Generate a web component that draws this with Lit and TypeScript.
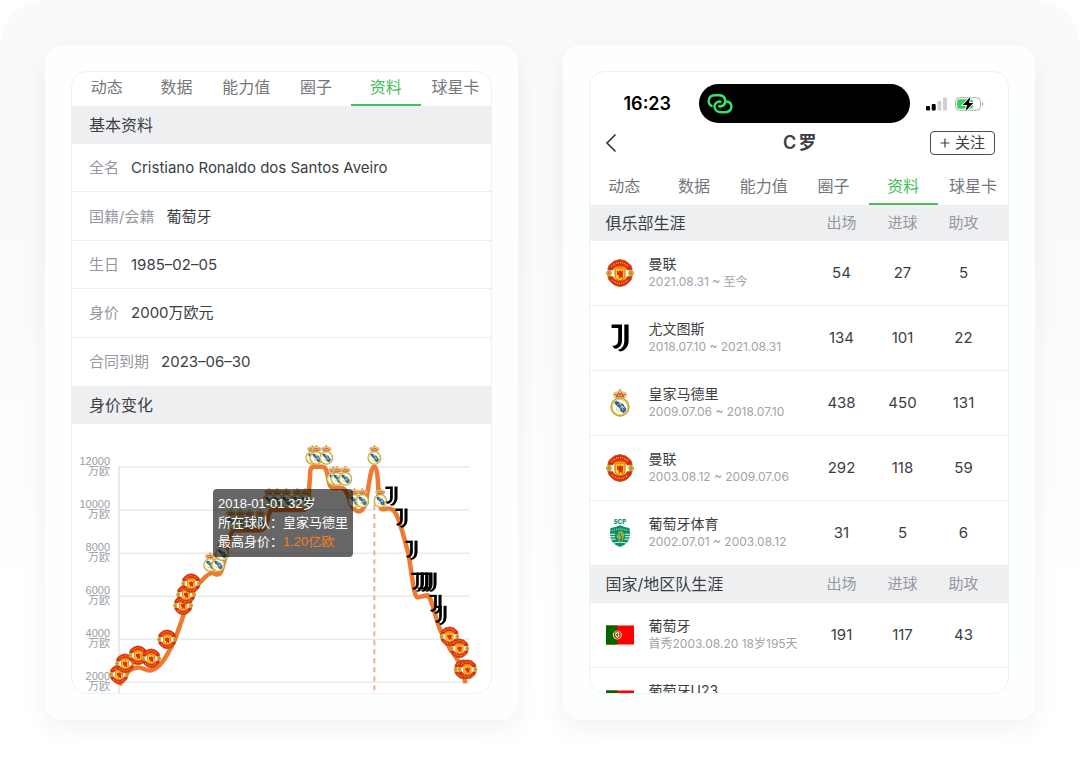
import { LitElement, html, css, svg } from "lit";
import { customElement, property } from "lit/decorators.js";
import { classMap } from "lit/directives/class-map.js";

type Crest = "united" | "juve" | "madrid" | "sporting" | "portugal";

interface Spell {
  crest: Crest;
  team: string;
  period: string;
  stats: [string, string, string];
}

const united = svg`
  <circle cx="14" cy="14" r="11.500" fill="#fffbe8"/>
  <path d="M1.800 11Q2 6.500 4.500 5Q8 1 14 .6Q20 1 23.500 5Q26 6.500 26.200 11L21.300 11Q19 6.800 14 6.700Q9 6.800 6.700 11Z" fill="#e8240c" stroke="#97701c" stroke-width=".8"/>
  <path d="M1.800 17.500Q2.500 21.500 5 23.200Q8.500 27.300 14 27.500Q19.500 27.300 23 23.200Q25.500 21.500 26.200 17.500L21.500 17.500Q19.500 21.700 14 21.900Q8.500 21.700 6.500 17.500Z" fill="#e8240c" stroke="#97701c" stroke-width=".8"/>
  <path d="M5.200 7.800Q14 -.6 22.800 7.800M5.800 20.800Q14 28.200 22.200 20.800" fill="none" stroke="#ffb01c" stroke-width="1.500" stroke-dasharray="1 1"/>
  <path d="M9 7.600H19V17.500Q18.500 20.500 14 21.900Q9.500 20.500 9 17.500Z" fill="#ffd514" stroke="#d9590e" stroke-width="1"/>
  <path d="M9.600 8.200H18.400V10.200H9.600Z" fill="#f58a16"/>
  <path d="M11 11.500L12.800 12.600L14.200 10.900L15.300 12.600L17.400 11.400L16.700 16L16.900 19.800L14.900 17.900L13 20.200L12.800 16.800L11 15.600Z" fill="#e02a0b"/>
  <circle cx="2.900" cy="14.300" r="2.300" fill="#ffcf14" stroke="#a0650f" stroke-width=".8"/>
  <circle cx="25.100" cy="14.300" r="2.300" fill="#ffcf14" stroke="#a0650f" stroke-width=".8"/>
  <path d="M1.800 14.300H4M24 14.300H26.200M2.900 13V15.600M25.100 13V15.600" stroke="#c4500b" stroke-width=".7"/>`;

const juve = svg`
  <path d="M5.600 .6H16V17.200Q15.800 21.500 12.300 23.700Q9.900 25.200 8 24.300L6.300 21.600Q9.300 22.200 11 20.300Q12.100 19 12.200 16.800V4H5.600Z" fill="#000"/>
  <path d="M18.300 .6H22.600V17.200Q22.400 22 19 25.300Q16.500 27.600 14 27.500L11.800 25.900Q15.300 25 16.800 22.700Q18.200 20.500 18.300 17.200Z" fill="#000"/>`;

const madrid = svg`
  <circle cx="14" cy="18" r="9" fill="#fbf4c8" stroke="#b5a545" stroke-width="1.400"/>
  <circle cx="14" cy="18" r="7.600" fill="#fff" stroke="#e6d054" stroke-width="1.200"/>
  <path d="M8.400 13.400Q9.500 11.600 11.800 12.400L17.500 15.500Q18.500 18 20.200 19.500Q20.200 22.500 17.800 24L14.500 22.500Q14.800 19.800 12.500 18Q9.500 16.500 8.400 13.400Z" fill="#1a5fb0"/>
  <path d="M11.500 15.500Q15.500 13.200 17.200 15M10.300 18.800Q10.500 23 15.500 22.300M14 14.200L17.200 21.400M12.200 20.400L16.600 17.400" fill="none" stroke="#d8c55c" stroke-width="1"/>
  <path d="M15.800 16.800L18.400 19.200" stroke="#fff" stroke-width=".9"/>
  <path d="M9 8.700Q6.700 6.600 7.300 4.700Q8.500 2.500 11 3Q12.500 1.500 14 2Q15.500 1.500 17 3Q19.500 2.500 20.700 4.700Q21.300 6.600 19 8.700Q14 7.400 9 8.700Z" fill="#f3cf78" stroke="#b09a58" stroke-width=".6"/>
  <path d="M8.700 5.200L11 6.200L12.700 4L14 6L15.300 4L17 6.200L19.300 5.200M10 7.700Q14 6.600 18 7.700" fill="none" stroke="#d6483f" stroke-width="1.200"/>
  <path d="M14 0V2.400M12.900 1H15.100" stroke="#a98d2a" stroke-width=".8"/>`;

const sporting = svg`
  <text x="14" y="5.200" text-anchor="middle" font-family="Inter, sans-serif" font-size="6" font-weight="800" fill="#0b8a5b">SCP</text>
  <path d="M4.600 9Q9.500 8.500 14 6.200Q18.500 8.500 23.400 9Q25.400 19 20.800 24Q18 26.700 14 28Q10 26.700 7.200 24Q2.600 19 4.600 9Z" fill="#0a9064"/>
  <path d="M3.600 15.300H9M19 15.300H24.400M3.600 17.700H9M19 17.700H24.400M4.400 20.200H9.500M18.500 20.200H23.600M6.500 24.200Q14 21.800 21.500 24.200" fill="none" stroke="#eef9f4" stroke-width="1"/>
  <path d="M6 12Q14 8 22 12" fill="none" stroke="#8ad0b4" stroke-width="1.300" stroke-dasharray="1.200 .8"/>
  <path d="M12.500 21.500L14.200 18.200L11.800 18.600L11 16.500M13.600 18.200L12.400 14.600L14.500 12.600L16.600 14L15 15.400L17 17.400L16 21M17 17.400L18 14.500" fill="none" stroke="#c9b23c" stroke-width="1.300"/>`;

const portugal = svg`
  <path d="M0 4.500H28V23.500H0Z" fill="#f00"/>
  <path d="M0 4.500H11.300V23.500H0Z" fill="#060"/>
  <circle cx="11.300" cy="14" r="4" fill="none" stroke="#e6d31c" stroke-width="1.200"/>
  <path d="M7.800 12.200L14.800 15.800M7.600 15.500Q11 12.500 15 12.500" fill="none" stroke="#d9c61a" stroke-width=".7"/>
  <path d="M9 11H13.600V14.600Q13.500 16.800 11.300 17.200Q9.100 16.800 9 14.600Z" fill="#fff" stroke="#e02020" stroke-width=".9"/>
  <path d="M11.300 12.200V15.800M10 13.800H12.600" stroke="#1c3fa8" stroke-width="1"/>`;

const crests = { united, juve, madrid, sporting, portugal };

const tabNames = ["动态", "数据", "能力值", "圈子", "资料", "球星卡"];

@customElement("profile-tabs")
export class ProfileTabs extends LitElement {
  @property() active = "资料";

  static styles = css`
    :host {
      display: block;
    }
    .tabs {
      display: grid;
      grid-template-columns: repeat(6, 1fr);
    }
    .tab {
      height: 34px;
      padding: 0 0 2px;
      border: 0;
      border-bottom: 2px solid transparent;
      background: none;
      color: #75777c;
      font: 400 16px/24px Inter, "Noto Sans CJK SC", sans-serif;
      white-space: nowrap;
    }
    .active {
      border-color: #4abf5d;
      color: #43bd57;
    }
  `;

  render() {
    return html`<nav class="tabs">
      ${tabNames.map(
        (name) => html`<button type="button"
          class=${classMap({ tab: true, active: name === this.active })}>${name}</button>`
      )}
    </nav>`;
  }
}

@customElement("value-chart")
export class ValueChart extends LitElement {
  static styles = css`
    :host {
      display: block;
      position: relative;
    }
    .plot {
      display: block;
      width: 100%;
    }
    .axis {
      fill: #989da3;
      font: 11px "Liberation Sans", "Noto Sans CJK SC", sans-serif;
      text-anchor: end;
    }
    .tip {
      position: absolute;
      left: 141px;
      top: 65px;
      padding: 5px 5px 6px;
      border-radius: 4px;
      background: rgba(0, 0, 0, 0.6);
      color: #fff;
      font: 13px/19px "Liberation Sans", "Noto Sans CJK SC", sans-serif;
      white-space: nowrap;
    }
    .line {
      margin: 0;
    }
    .price {
      color: #f57c1c;
    }
  `;

  private marks: [Crest, number, number][] = [
    ["united", 119, 674], ["united", 125, 663], ["united", 138, 655], ["united", 151, 658],
    ["united", 167, 639], ["united", 183, 605], ["united", 186, 594], ["united", 191, 583],
    ["madrid", 210, 562], ["madrid", 218, 562], ["madrid", 222, 551],
    ["madrid", 231, 519], ["madrid", 240, 519], ["madrid", 249, 519], ["madrid", 260, 519],
    ["madrid", 269, 498], ["madrid", 277, 498], ["madrid", 286, 498], ["madrid", 297, 498], ["madrid", 305, 498],
    ["madrid", 312, 455], ["madrid", 316, 455], ["madrid", 326, 455],
    ["madrid", 333, 476], ["madrid", 337, 476], ["madrid", 345, 476],
    ["madrid", 354, 498], ["madrid", 362, 498], ["madrid", 374, 455], ["madrid", 380, 498],
    ["juve", 391, 496], ["juve", 401, 518], ["juve", 411, 550],
    ["juve", 417, 582], ["juve", 422, 582], ["juve", 426, 582], ["juve", 430, 582],
    ["juve", 435, 604], ["juve", 440, 615],
    ["united", 449, 636], ["united", 459, 648], ["united", 463, 669], ["united", 467, 669],
  ];

  render() {
    return html`
      <svg class="plot" viewBox="72 424 418 270" role="img" aria-label="身价变化">
        ${[12000, 10000, 8000, 6000, 4000, 2000].map(
          (value, i) => svg`
            <path d="M119 ${467 + i * 43}H469" stroke="#e9eaef" stroke-width="1.500"/>
            <text class="axis" x="110" y=${465 + i * 43}>${value}</text>
            <text class="axis" x="110" y=${475 + i * 43}>万欧</text>`
        )}
        <path d="M119 466V694" stroke="#dfe2ea" stroke-width="1.500"/>
        <path d="M119.300 685Q126 668 138 667.300C145 667 147 674 157 667C166 660 170 648 175 639L184 613
          C190 592 194 588 201 581Q210 571 214 573.500C222 577 222 568 226 553Q230 530 234 530H255
          C265 532 266 526 269 513Q270 509.500 274 510H302C307 510 308 505 309 487L310 471Q310.500 466.700 314 466.700H322
          C328 467 327 480 330 486C333 491 340 485 344 489C349 495 349 504 354 509Q360 515 364 506
          C368 497 369 468 373.700 466.700C379 466 377 500 380 507C382 513 386 505 393 510
          C400 517 404 542 408 553L413 586Q415 598 418 597L427 595C432 598 434 616 440 630Q445 641 451 651Q461 662 465 683"
          fill="none" stroke="#ef7931" stroke-width="4.500" stroke-linejoin="round"/>
        <path d="M374 505V693" stroke="#f3ae83" stroke-width="2" stroke-dasharray="5 4"/>
        ${this.marks.map(
          ([crest, x, y]) => svg`<svg x=${x - 10} y=${y - 10} width="20" height="20" viewBox="0 0 28 28">${crests[crest]}</svg>`
        )}
      </svg>
      <div class="tip" role="tooltip">
        <p class="line">2018-01-01 32岁</p>
        <p class="line">所在球队：皇家马德里</p>
        <p class="line">最高身价：<span class="price">1.20亿欧</span></p>
      </div>
    `;
  }
}

@customElement("career-table")
export class CareerTable extends LitElement {
  @property() heading = "";
  @property({ attribute: false }) spells: Spell[] = [];
  @property({ type: Boolean }) compact = false;

  static styles = css`
    :host {
      display: block;
    }
    .table {
      display: block;
      font: 15px/20px Inter, "Noto Sans CJK SC", sans-serif;
      color: #3b3e43;
    }
    .group {
      display: block;
    }
    .row {
      display: grid;
      grid-template-columns: minmax(0, 1fr) 61px 61px 61px;
      align-items: center;
      height: 65px;
      box-sizing: border-box;
      padding: 0 14px 0 16px;
      border-bottom: 1px solid #eceef1;
    }
    .group .row:last-child {
      height: 64px;
      border-bottom: 0;
    }
    .group .head {
      height: 38px;
      background: #eeeff1;
    }
    .group .head:last-child {
      height: 38px;
    }
    .group .compact:last-child {
      height: 36px;
    }
    .cell {
      padding: 0;
      font-weight: 400;
      text-align: center;
    }
    .label {
      color: #9599a0;
    }
    .title {
      font-size: 16px;
      text-align: left;
    }
    .club {
      display: flex;
      align-items: center;
      gap: 15px;
      text-align: left;
    }
    .crest {
      flex: none;
      width: 28px;
      height: 28px;
      overflow: visible;
    }
    .team {
      display: block;
      font-size: 14px;
      line-height: 18px;
    }
    .period {
      display: block;
      min-height: 18px;
      color: #a0a4aa;
      font-size: 12px;
      line-height: 18px;
      white-space: nowrap;
    }
  `;

  render() {
    return html`<table class="table">
      <thead class="group">
        <tr class=${classMap({ row: true, head: true, compact: this.compact })}>
          <th class="cell title" scope="col">${this.heading}</th>
          <th class="cell label" scope="col">出场</th>
          <th class="cell label" scope="col">进球</th>
          <th class="cell label" scope="col">助攻</th>
        </tr>
      </thead>
      <tbody class="group">
        ${this.spells.map(
          (s) => html`<tr class="row">
            <td class="cell club">
              <svg class="crest" viewBox="0 0 28 28" aria-hidden="true">${crests[s.crest]}</svg>
              <div>
                <span class="team">${s.team}</span>
                <span class="period">${s.period}</span>
              </div>
            </td>
            ${s.stats.map((n) => html`<td class="cell">${n}</td>`)}
          </tr>`
        )}
      </tbody>
    </table>`;
  }
}

@customElement("app-root")
export class AppRoot extends LitElement {
  static styles = css`
    :host {
      display: block;
      font-family: Inter, "Noto Sans CJK SC", sans-serif;
      color: #3b3e43;
    }
    .page {
      display: flex;
      gap: 45px;
      min-height: 100vh;
      box-sizing: border-box;
      padding: 45px;
      border-radius: 45px 45px 0 0;
      background: linear-gradient(#fafafa 0%, #fafafa 30%, #fff 80%);
    }
    .panel {
      flex: 1 1 0;
      min-width: 0;
      align-self: flex-start;
      padding: 26px;
      border-radius: 18px;
      background: #fdfefe;
      box-shadow: 0 8px 28px rgba(0, 0, 0, 0.06);
    }
    .screen {
      height: 623px;
      box-sizing: border-box;
      overflow: hidden;
      border: 1px solid #eef2f2;
      border-radius: 16px;
      background: #fff;
    }
    .band {
      margin: 0;
      padding: 0 17px;
      background: #eeeff1;
      font-size: 16px;
      font-weight: 400;
      line-height: 38px;
    }
    .facts {
      display: grid;
      grid-auto-rows: 1fr;
      height: 242px;
      margin: 0;
    }
    .fact {
      display: flex;
      align-items: center;
      gap: 12px;
      padding: 1px 17px 0;
      border-bottom: 1px solid #eceef1;
      font-size: 15px;
      line-height: 20px;
    }
    .fact:last-child {
      border-bottom: 0;
    }
    .key {
      color: #9599a0;
    }
    .value {
      margin: 0;
    }
    .status {
      display: flex;
      align-items: center;
      padding: 12px 23px 0 34px;
    }
    .time {
      flex: 0 0 75px;
      color: #000;
      font-size: 18px;
      font-weight: 600;
      line-height: 24px;
    }
    .island {
      flex: 0 1 211px;
      display: flex;
      align-items: center;
      height: 39px;
      box-sizing: border-box;
      padding: 0 8px;
      border-radius: 20px;
      background: #000;
    }
    .signals {
      flex: none;
      margin-left: auto;
    }
    .bar {
      display: grid;
      grid-template-columns: 1fr auto 1fr;
      align-items: center;
      height: 40px;
      margin-bottom: 8px;
      padding: 0 13px 0 15px;
    }
    .back {
      justify-self: start;
      display: flex;
      padding: 0;
      border: 0;
      background: none;
    }
    .name {
      display: flex;
      gap: 2px;
      margin: 0;
      font-size: 18px;
      font-weight: 600;
      line-height: 24px;
    }
    .follow {
      justify-self: end;
      display: flex;
      align-items: center;
      gap: 5px;
      height: 24px;
      box-sizing: border-box;
      padding: 0 9px;
      border: 1px solid #4a4c50;
      border-radius: 4px;
      background: #fff;
      color: #3b3e43;
      font: 400 15px/20px Inter, "Noto Sans CJK SC", sans-serif;
    }
  `;

  private facts = [
    ["全名", "Cristiano Ronaldo dos Santos Aveiro"],
    ["国籍/会籍", "葡萄牙"],
    ["生日", "1985–02–05"],
    ["身价", "2000万欧元"],
    ["合同到期", "2023–06–30"],
  ];

  private clubs: Spell[] = [
    { crest: "united", team: "曼联", period: "2021.08.31 ~ 至今", stats: ["54", "27", "5"] },
    { crest: "juve", team: "尤文图斯", period: "2018.07.10 ~ 2021.08.31", stats: ["134", "101", "22"] },
    { crest: "madrid", team: "皇家马德里", period: "2009.07.06 ~ 2018.07.10", stats: ["438", "450", "131"] },
    { crest: "united", team: "曼联", period: "2003.08.12 ~ 2009.07.06", stats: ["292", "118", "59"] },
    { crest: "sporting", team: "葡萄牙体育", period: "2002.07.01 ~ 2003.08.12", stats: ["31", "5", "6"] },
  ];

  private nations: Spell[] = [
    { crest: "portugal", team: "葡萄牙", period: "首秀2003.08.20 18岁195天", stats: ["191", "117", "43"] },
    { crest: "portugal", team: "葡萄牙U23", period: "", stats: ["", "", ""] },
  ];

  render() {
    return html`<main class="page">
      <section class="panel">
        <div class="screen">
          <profile-tabs></profile-tabs>
          <h2 class="band">基本资料</h2>
          <dl class="facts">
            ${this.facts.map(
              ([k, v]) => html`<div class="fact"><dt class="key">${k}</dt><dd class="value">${v}</dd></div>`
            )}
          </dl>
          <h2 class="band">身价变化</h2>
          <value-chart></value-chart>
        </div>
      </section>
      <section class="panel">
        <div class="screen">
          <div class="status">
            <span class="time">16:23</span>
            <div class="island">
              <svg width="26" height="22" viewBox="0 0 26 22" fill="none" stroke-linecap="round" aria-hidden="true">
                <path d="M5.500 13.200C-.5 11 1 2.500 7.500 2.300H12C18.500 2.300 20.500 9.500 16 12.500Q14.500 13.500 12.500 13.200" stroke="#35e366" stroke-width="2.400"/>
                <path d="M20 8.500C26.500 10 25.500 18.800 18.500 19.200H14C7 19.200 5.500 11.500 10.500 9Q12 8.300 13.500 8.700" stroke="#000" stroke-width="4"/>
                <path d="M14.500 2.500C18.500 4 19.500 10 16 12.500Q14.500 13.500 12.500 13.200" stroke="#35e366" stroke-width="2.400"/>
                <path d="M20 8.500C26.500 10 25.500 18.800 18.500 19.200H14C7 19.200 5.500 11.500 10.500 9Q12 8.300 13.500 8.700" stroke="#35e366" stroke-width="2.400"/>
              </svg>
            </div>
            <svg class="signals" width="59" height="16" viewBox="0 0 59 16" aria-hidden="true">
              <rect x="0" y="10" width="4" height="4.500" rx="1"/>
              <rect x="5.700" y="8" width="4" height="6.500" rx="1"/>
              <rect x="11.400" y="5" width="4" height="9.500" rx="1" fill="#cfcfcf"/>
              <rect x="17" y="1.500" width="4" height="13" rx="1" fill="#cfcfcf"/>
              <rect x="29.500" y="1.700" width="25" height="12.600" rx="4" fill="#fff" stroke="#adadad"/>
              <rect x="31" y="3.200" width="16" height="9.600" rx="2.500" fill="#38cf5e"/>
              <path d="M56.200 5.700Q58.400 8 56.200 10.300Z" fill="#adadad"/>
              <path d="M44.500 .8L36.700 9H41L39.500 15.200L47.300 7H43Z" stroke="#fff" stroke-width="1.800" paint-order="stroke"/>
            </svg>
          </div>
          <header class="bar">
            <button class="back" type="button" aria-label="返回">
              <svg width="12" height="20" viewBox="0 0 12 20" fill="none" stroke="#333" stroke-width="1.600" aria-hidden="true">
                <path d="M10.500 1.500L2 10L10.500 18.500"/>
              </svg>
            </button>
            <h1 class="name"><span>C</span><span>罗</span></h1>
            <button class="follow" type="button">
              <svg width="10" height="10" viewBox="0 0 10 10" stroke="#3b3e43" stroke-width="1.200" aria-hidden="true">
                <path d="M5 .5V9.500M.5 5H9.500"/>
              </svg>
              关注
            </button>
          </header>
          <profile-tabs></profile-tabs>
          <career-table heading="俱乐部生涯" compact .spells=${this.clubs}></career-table>
          <career-table heading="国家/地区队生涯" .spells=${this.nations}></career-table>
        </div>
      </section>
    </main>`;
  }
}
